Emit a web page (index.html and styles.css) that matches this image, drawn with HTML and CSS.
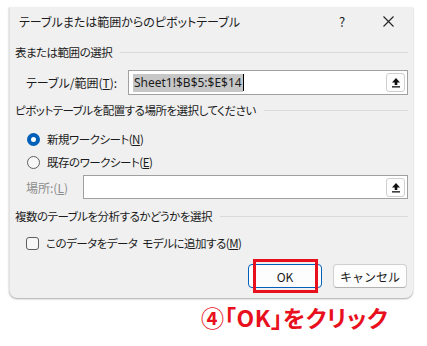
FILE: index.html
```html
<!DOCTYPE html>
<html lang="ja">
<head>
  <meta charset="UTF-8">
  <title>テーブルまたは範囲からのピボットテーブル</title>
  <link rel="stylesheet" href="styles.css">
</head>
<body>
  <div class="dialog">
    <!-- title bar -->
    <div class="titlebar">
      <span class="title">テーブルまたは範囲からのピボットテーブル</span>
      <span class="help">?</span>
      <span class="close">
        <svg width="11" height="11" viewBox="0 0 11 11"><path d="M0.5 0.5 L10.5 10.5 M10.5 0.5 L0.5 10.5" stroke="#222" stroke-width="1.1"/></svg>
      </span>
    </div>

    <div class="section">表または範囲の選択</div>
    <div class="field-row range-row">
      <span class="field-label">テーブル/範囲(<u>T</u>):</span>
      <div class="input">
        <span class="selected">Sheet1!$B$5:$E$14</span><span class="caret"></span>
        <span class="pick">
          <svg width="10" height="11" viewBox="0 0 10 11"><path d="M5 1 L9 5.5 H6.3 V8 H3.7 V5.5 H1 Z" fill="#111"/><rect x="1" y="9.2" width="8" height="1.3" fill="#111"/></svg>
        </span>
      </div>
    </div>

    <div class="section sec2">ピボットテーブルを配置する場所を選択してください</div>
    <label class="option opt1"><span class="radio on"></span><span>新規ワークシート(<u>N</u>)</span></label>
    <label class="option opt2"><span class="radio"></span><span>既存のワークシート(<u>E</u>)</span></label>
    <div class="field-row loc-row">
      <span class="field-label muted">場所:(<u>L</u>)</span>
      <div class="input">
        <span class="pick">
          <svg width="10" height="11" viewBox="0 0 10 11"><path d="M5 1 L9 5.5 H6.3 V8 H3.7 V5.5 H1 Z" fill="#111"/><rect x="1" y="9.2" width="8" height="1.3" fill="#111"/></svg>
        </span>
      </div>
    </div>

    <div class="section sec3">複数のテーブルを分析するかどうかを選択</div>
    <label class="option opt3"><span class="check"></span><span>このデータをデータ モデルに追加する(<u>M</u>)</span></label>

    <div class="buttons">
      <button class="btn ok">OK<span class="mark"></span></button>
      <button class="btn">キャンセル</button>
    </div>
  </div>

  <div class="caption">④「OK」をクリック</div>
</body>
</html>
```

FILE: styles.css
```css
* {
  margin: 0; padding: 0; box-sizing: border-box;
}

body {
  background: #fff;
  font-family: "Noto Sans CJK JP", "Noto Sans", sans-serif;
  font-size: 12px;
  color: #1b1b1b;
  font-feature-settings: "palt";
}

.dialog {
  margin: 7px 0 0 9px;
  width: 404px;
  height: 291px;
  background: #f0f0f0;
  border-left: 1px solid #e2e2e2;
  border-radius: 0 0 8px 8px;
  box-shadow: 0 1px 2px rgba(0, 0, 0, 0.35);
  padding: 0 5px 0 5px;
  display: flex;
  flex-direction: column;
}

.titlebar {
  height: 28px;
  display: flex;
  align-items: center;
  padding-left: 4px;
}

.title { flex: 1; font-size: 12px; }
.help { width: 14px; margin-right: 30px; font-size: 13px; }
.close { width: 20px; margin-right: 5px; display: flex; }

.section {
  height: 20px;
  margin-top: 7px;
  display: flex;
  align-items: center;
  gap: 8px;
  font-size: 11.5px;
  letter-spacing: -0.5px;
}

.section::after {
  content: "";
  flex: 1;
  height: 1px;
  background: #dadada;
}

.sec2 { margin-top: 5px; }
.sec3 { margin-top: 7px; }

.field-row {
  display: flex;
  align-items: center;
}

.field-label { flex: none; font-size: 12px; }
.muted { color: #8c8c8c; }

.range-row { margin-top: 8px; padding-left: 11px; }
.range-row .field-label { width: 102px; }
.loc-row { margin-top: 3px; padding-left: 11px; }
.loc-row .field-label { width: 57px; }

.input {
  flex: 1;
  height: 25px;
  background: #fff;
  border: 1px solid #a0a0a0;
  display: flex;
  align-items: center;
  padding: 0 2px 0 4px;
}

.loc-row .input { height: 24px; }

.selected {
  font-family: "Noto Sans", sans-serif;
  font-size: 12px;
  background: #c7c7c7;
  line-height: 18px;
  padding: 0 1px;
}

.caret {
  width: 1px;
  height: 17px;
  background: #000;
}

.pick {
  margin-left: auto;
  width: 19px;
  height: 19px;
  border: 1px solid #cfcfcf;
  border-radius: 3px;
  background: #fdfdfd;
  display: flex;
  align-items: center;
  justify-content: center;
}

.option {
  height: 20px;
  display: flex;
  align-items: center;
  gap: 7px;
  padding-left: 12px;
  font-size: 11.5px;
  letter-spacing: -0.5px;
  word-spacing: 3px;
}

.opt1 { margin-top: 9px; }
.opt2 { margin-top: 3px; }
.opt3 { margin-top: 7px; padding-left: 11px; }

.radio {
  width: 13px;
  height: 13px;
  border-radius: 50%;
  border: 1px solid #5f5f5f;
  background: #f7f7f7;
}

.radio.on {
  border: 4px solid #005fb8;
  background: #fff;
}

.check {
  width: 13px;
  height: 13px;
  border-radius: 3px;
  border: 1px solid #5f5f5f;
  background: #f7f7f7;
}

.buttons {
  margin-top: 11px;
  display: flex;
  justify-content: flex-end;
  gap: 11px;
  padding-right: 1px;
}

.btn {
  position: relative;
  width: 74px;
  height: 24px;
  background: #fdfdfd;
  border: 1px solid #d0d0d0;
  border-bottom-color: #b0b0b0;
  border-radius: 4px;
  font-family: "Noto Sans CJK JP", "Noto Sans", sans-serif;
  font-size: 12px;
  color: #1b1b1b;
}

.ok {
  border: 1px solid #005fb8;
}

/* red highlight round the OK button */
.mark {
  position: absolute;
  left: 4px;
  top: -6px;
  width: 65px;
  height: 34px;
  border: 3px solid #e8101c;
}

.caption {
  margin: 2px 0 0 201px;
  font-size: 23px;
  font-weight: 700;
  letter-spacing: 0.5px;
  color: #e8101c;
}
```
